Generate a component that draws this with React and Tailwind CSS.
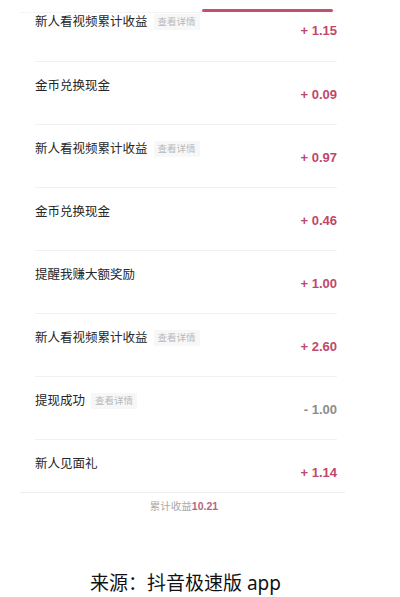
import React from 'react';

const rows = [
    { title: '新人看视频累计收益', detail: true, amount: '+ 1.15' },
    { title: '金币兑换现金', amount: '+ 0.09' },
    { title: '新人看视频累计收益', detail: true, amount: '+ 0.97' },
    { title: '金币兑换现金', amount: '+ 0.46' },
    { title: '提醒我赚大额奖励', amount: '+ 1.00' },
    { title: '新人看视频累计收益', detail: true, amount: '+ 2.60' },
    { title: '提现成功', detail: true, amount: '- 1.00', out: true },
    { title: '新人见面礼', amount: '+ 1.14' },
];

const Row = ({ item, idx }) => {
    const first = idx === 0;
    const last = idx === rows.length - 1;
    return (
        <div className={`flex justify-between box-border ${first ? 'h-[49px]' : last ? 'h-[52px]' : 'h-[63px]'} ${last ? '' : 'border-b border-[#f1f1f1]'}`}>
            <div className={`flex items-center h-fit ${first ? 'pt-[1px]' : 'pt-[16px]'}`}>
                <span className="text-[12.5px] leading-[16px] text-[#262626]">{item.title}</span>
                {item.detail && (
                    <span className="ml-[6px] px-[4px] h-[16px] leading-[16px] text-[9.5px] text-[#b8b8b8] bg-[#f7f7f7]">查看详情</span>
                )}
            </div>
            <div
                className={`h-fit text-[13px] leading-[16px] font-bold ${first ? 'pt-[10px]' : 'pt-[25px]'} ${item.out ? 'text-[#8c8c8c]' : 'text-[#c0476b]'}`}
                style={{ fontFamily: '"Liberation Sans", Arial, sans-serif' }}
            >
                {item.amount}
            </div>
        </div>
    );
};

export default function App() {
    return (
        <div
            className="w-[400px] h-[597px] bg-white overflow-hidden flex flex-col"
            style={{ fontFamily: '"Noto Sans", "Noto Sans CJK SC", sans-serif' }}
        >
            {/* Card */}
            <div className="ml-[20px] w-[325px] border-b border-[#eeeeee]">
                {/* tab header, mostly cut off */}
                <div className="flex h-[13px] items-start">
                    <div className="w-[182px] h-full border-b border-[#f4f4f4]" />
                    <div className="mt-[9px] w-[131px] h-[2.5px] rounded-full bg-[#c3506f]" />
                </div>
                <div className="pl-[15px] pr-[8px]">
                    {rows.map((item, idx) => <Row key={idx} item={item} idx={idx} />)}
                </div>
            </div>

            <div className="w-[368px] text-center pt-[6px] text-[10.5px] leading-[14px] text-[#a8a8a8]">
                累计收益<span className="font-bold text-[#b5667f]" style={{ fontFamily: '"Liberation Sans", Arial, sans-serif' }}>10.21</span>
            </div>

            <div className="w-[371px] text-center mt-[58px] text-[19px] leading-[24px] text-[#111]">
                来源：抖音极速版 app
            </div>
        </div>
    );
}
